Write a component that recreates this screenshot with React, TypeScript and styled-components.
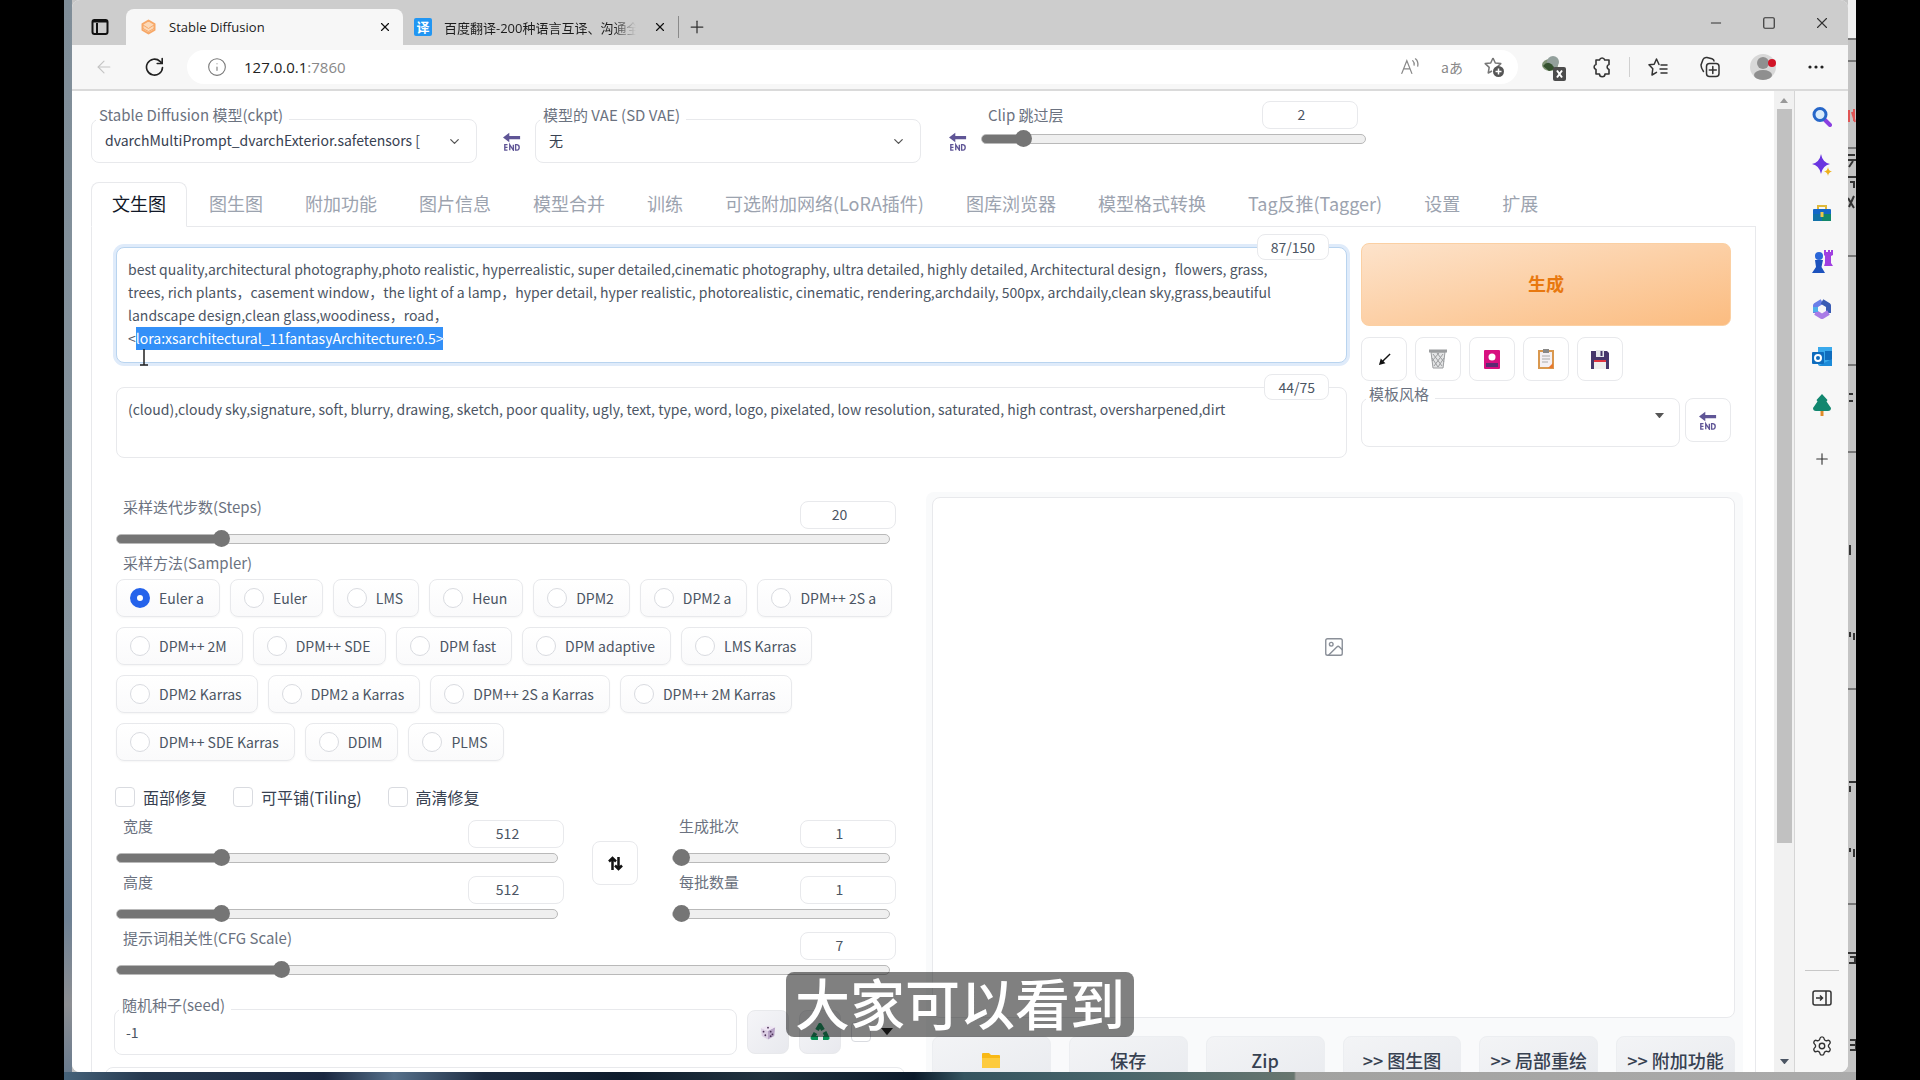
import React, { useEffect, useId, useRef, useState } from 'react';
import styled, { createGlobalStyle, css } from 'styled-components';
import { ArrowLeft, ChevronDown, Image as ImageIcon, Info, Minus, Plus, Settings, Square, X } from 'lucide-react';

const uiFont = '"Noto Sans CJK SC", "Noto Sans", sans-serif';
const chromeFont = '"Open Sans", "Noto Sans CJK SC", sans-serif';
const line = '#e8e9ec';

const GlobalStyle = createGlobalStyle`
  * { box-sizing: border-box; }
  html, body, #root { height: 100%; }
  body { margin: 0; background: #000; overflow: hidden; font-family: ${uiFont}; color: #4b5563; }
  button, input, select, textarea { font-family: inherit; color: inherit; margin: 0; }
  button { cursor: pointer; padding: 0; }
  svg { display: block; flex: none; }
`;

/* ---------- desktop and browser frame ---------- */

const Desktop = styled.div`
  position: relative;
  height: 100vh;
  margin: 0 64px;
  padding: 0 8px 8px;
  overflow: hidden;
  background:
    linear-gradient(90deg, #46637a 0, #26394f 80px, #1a2740 260px, #56708a 330px, #1c2b40 420px, #0d1b2b 560px, #22333f 700px, #0b1a2a 850px, #35545f 900px, #4a666b 1060px, #68766f 1230px, #a2a2a0 1232px, #ababab 100%) bottom / 100% 8px no-repeat,
    linear-gradient(180deg, #7f8d98 0, #87959f 60%, #6e8194 85%, #8d8f93 93%, #66798e 100%) left / 8px 100% no-repeat,
    #c4c4c4;
`;

const DocumentEdge = styled.svg`
  position: absolute;
  top: 0;
  right: 0;
  width: 8px;
  height: 1072px;
`;

const Window = styled.div`
  position: relative;
  display: flex;
  flex-direction: column;
  height: 100%;
  overflow: hidden;
  border-radius: 8px;
  background: #f7f7f7;
`;

const TitleBar = styled.header`
  display: flex;
  align-items: flex-end;
  height: 45px;
  flex: none;
  padding-left: 18px;
  background: #cdcdcd;
  font: 13px ${chromeFont};
  color: #1b1b1b;
`;

const ChromeButton = styled.button<{ $w?: number; $h?: number }>`
  display: flex;
  align-items: center;
  justify-content: center;
  width: ${(p) => p.$w ?? 24}px;
  height: ${(p) => p.$h ?? 36}px;
  flex: none;
  border: 0;
  background: none;
  color: #333;
`;

const TabStrip = styled.div`
  display: flex;
  margin-left: 16px;
`;

const BrowserTab = styled.div<{ $active?: boolean }>`
  display: flex;
  align-items: center;
  gap: 12px;
  width: ${(p) => (p.$active ? 277 : 275)}px;
  height: 36px;
  padding: 0 6px 0 ${(p) => (p.$active ? 14 : 11)}px;
  border-radius: 8px 8px 0 0;
  background: ${(p) => (p.$active ? '#f7f7f7' : 'transparent')};
`;

const TabTitle = styled.span<{ $fade?: boolean }>`
  flex: 1;
  min-width: 0;
  overflow: hidden;
  white-space: nowrap;
  ${(p) => p.$fade && css`mask-image: linear-gradient(90deg, #000 88%, transparent);`}
`;

const TranslateBadge = styled.span`
  width: 18px;
  height: 18px;
  border-radius: 2px;
  background: #2196f3;
  color: #fff;
  font: bold 13px/18px ${uiFont};
  text-align: center;
`;

const Divider = styled.span<{ $h: number; $c?: string }>`
  width: 1px;
  height: ${(p) => p.$h}px;
  background: ${(p) => p.$c ?? '#8a8a8a'};
`;

const NewTab = styled.div`
  display: flex;
  align-items: center;
  gap: 6px;
  height: 36px;
`;

const WindowButtons = styled.div`
  display: flex;
  align-self: stretch;
  align-items: center;
  margin-left: auto;
`;

const Toolbar = styled.div`
  display: flex;
  align-items: center;
  height: 46px;
  flex: none;
  padding: 0 8px 0 16px;
  border-bottom: 2px solid #dadada;
`;

const AddressBar = styled.div`
  display: flex;
  align-items: center;
  flex: 1;
  height: 34px;
  margin-left: -3px;
  margin-right: 15px;
  padding: 0 3px 0 20px;
  border-radius: 17px;
  background: #fff;
  color: #777;
`;

const Address = styled.div`
  flex: 1;
  margin-left: 17px;
  font: 15px ${chromeFont};
  color: #888;
  b { font-weight: 400; color: #222; }
`;

const ToolIcon = styled(ChromeButton)`
  width: 42px;
  height: 34px;
`;

const Language = styled.span`
  font-size: 14px;
  line-height: 20px;
  color: #888;
`;

const Body = styled.div`
  display: flex;
  flex: 1;
  min-height: 0;
`;

const Page = styled.main`
  flex: 1;
  min-width: 0;
  overflow: hidden;
  padding: 10px 18px 0 19px;
  background: #fff;
`;

const ScrollBar = styled.div`
  display: flex;
  flex-direction: column;
  align-items: center;
  justify-content: space-between;
  width: 21px;
  padding: 7px 0 8px;
  border-right: 1px solid #d6d6d6;
  background: #f1f1f1;
`;

const ScrollThumb = styled.div`
  width: 15px;
  height: 76%;
  margin-bottom: auto;
  margin-top: 6px;
  background: #c1c1c1;
`;

const SideBar = styled.aside`
  display: flex;
  flex-direction: column;
  align-items: center;
  width: 53px;
  padding: 2px 0;
  background: #f7f7f7;
`;

const SideButton = styled(ChromeButton)`
  width: 48px;
  height: 48px;
`;

const AddButton = styled(SideButton)`
  margin-top: 6px;
`;

const SideRule = styled.span`
  width: 34px;
  height: 1px;
  margin-top: auto;
  margin-bottom: 3px;
  background: #c8c8c8;
`;

/* ---------- form parts ---------- */

const QuickSettings = styled.div`
  display: grid;
  grid-template-columns: minmax(0, 386px) 58px minmax(0, 386px) 60px minmax(0, 385px);
  align-items: start;
`;

const FieldBox = styled.div<{ $h: number; $top?: number }>`
  position: relative;
  flex: 1;
  height: ${(p) => p.$h}px;
  margin-top: ${(p) => p.$top ?? 0}px;
  border: 1px solid ${line};
  border-radius: 8px;
  background: #fff;
`;

const FieldLabel = styled.label`
  position: absolute;
  top: -15px;
  left: 4px;
  padding: 0 6px 0 3px;
  border-radius: 4px;
  background: #fff;
  font-size: 15px;
  line-height: 20px;
  white-space: nowrap;
  color: #6b7280;
`;

const Select = styled.select`
  width: 100%;
  height: 100%;
  padding: 0 44px 2px 13px;
  border: 0;
  border-radius: 8px;
  appearance: none;
  background: transparent;
  font-size: 14px;
  color: #374151;
`;

const SelectArrow = styled.span<{ $right: number; $top: number }>`
  position: absolute;
  right: ${(p) => p.$right}px;
  top: ${(p) => p.$top}px;
  pointer-events: none;
  color: #555;
`;

const PlainInput = styled.input`
  width: 100%;
  height: 100%;
  padding: 0 11px;
  border: 0;
  border-radius: 8px;
  background: transparent;
  font-size: 14px;
`;

const IconButton = styled.button<{ $filled?: boolean; $w?: number; $top?: number }>`
  display: flex;
  align-items: center;
  justify-content: center;
  width: ${(p) => p.$w ?? 46}px;
  height: 44px;
  flex: none;
  margin-top: ${(p) => p.$top ?? 0}px;
  border: 1px solid ${line};
  border-radius: 8px;
  background: ${(p) => (p.$filled ? 'linear-gradient(135deg, #f5f5f8, #e8e9ee)' : '#fff')};
  color: #111;
`;

const RefreshButton = styled(IconButton)`
  justify-self: end;
  border-color: transparent;
`;

const SliderBlock = styled.div`
  display: grid;
  grid-template-columns: 1fr auto;
  grid-template-rows: 28px 20px;
`;

const SliderLabel = styled.label<{ $low?: boolean }>`
  padding-left: 7px;
  font-size: 15px;
  line-height: ${(p) => (p.$low ? 28 : 12)}px;
  color: #6b7280;
`;

const NumberBox = styled.input<{ $inset?: number }>`
  width: 96px;
  height: 28px;
  margin-right: ${(p) => p.$inset ?? 0}px;
  padding: 0 17px 2px 0;
  border: 1px solid ${line};
  border-radius: 8px;
  background: #fff;
  font-size: 14px;
  text-align: center;
  appearance: textfield;
  &::-webkit-inner-spin-button { appearance: none; }
`;

const Range = styled.input<{ $full?: boolean }>`
  grid-column: 1 / -1;
  width: ${(p) => (p.$full ? '100%' : 'calc(100% - 6px)')};
  height: 20px;
  margin: 0;
  appearance: none;
  background: none;
  &::-webkit-slider-runnable-track {
    height: 10px;
    border: 1px solid #b9b9b9;
    border-radius: 5px;
    background: linear-gradient(#757575, #757575) left / var(--fill) 100% no-repeat border-box, #efefef;
  }
  &::-webkit-slider-thumb {
    appearance: none;
    width: 17px;
    height: 17px;
    margin-top: -5px;
    border-radius: 50%;
    background: #757575;
  }
`;

/* ---------- tabs and panel ---------- */

const Tabs = styled.nav`
  display: flex;
  gap: 2px;
  margin-top: 19px;
  margin-bottom: -1px;
`;

const TabButton = styled.button<{ $active?: boolean }>`
  height: 45px;
  padding: 0 20px 3px;
  border: 1px solid ${(p) => (p.$active ? line : 'transparent')};
  border-bottom-color: ${(p) => (p.$active ? '#fff' : 'transparent')};
  border-radius: 8px 8px 0 0;
  background: ${(p) => (p.$active ? '#fff' : 'transparent')};
  font-size: 18px;
  white-space: nowrap;
  color: ${(p) => (p.$active ? '#111827' : '#9ca3af')};
  & + & { border-width: 1px 0; }
`;

const Panel = styled.section`
  padding: 16px 24px 0;
  border: 1px solid ${line};
`;

const PromptRow = styled.div`
  display: grid;
  grid-template-columns: 1231fr 370fr;
  gap: 14px;
`;

const PromptColumn = styled.div`
  display: flex;
  flex-direction: column;
  gap: 24px;
  padding-top: 4px;
`;

const PromptBox = styled.div`
  position: relative;
  display: flex;
`;

const Prompt = styled.textarea<{ $h: number; $lit?: boolean }>`
  width: 100%;
  height: ${(p) => p.$h}px;
  padding: 10px 11px 0;
  border: 1px solid ${(p) => (p.$lit ? '#b9d4ef' : line)};
  border-radius: 8px;
  box-shadow: ${(p) => (p.$lit ? '0 0 0 3px #dfebfa' : 'none')};
  background: #fff;
  outline: 0;
  resize: none;
  overflow: hidden;
  font-size: 14px;
  line-height: 23px;
  &::selection { background: #3390f8; color: #fff; }
`;

const TokenCount = styled.output`
  position: absolute;
  top: -13px;
  right: 18px;
  padding: 0 13px;
  border: 1px solid ${line};
  border-radius: 8px;
  background: #fff;
  font-size: 14px;
  line-height: 24px;
`;

const MousePointer = styled.svg`
  position: absolute;
  left: 23px;
  top: 101px;
`;

const ActionColumn = styled.div`
  display: flex;
  flex-direction: column;
`;

const GenerateButton = styled.button`
  height: 83px;
  padding-bottom: 3px;
  border: 1px solid #fbd0a3;
  border-radius: 8px;
  background: linear-gradient(to bottom right, #fde3cb, #fbbc80);
  font-size: 18px;
  font-weight: 700;
  color: #e8780f;
`;

const ToolRow = styled.div<{ $top: number; $gap: number }>`
  display: flex;
  gap: ${(p) => p.$gap}px;
  margin-top: ${(p) => p.$top}px;
`;

const Workspace = styled.div`
  display: grid;
  grid-template-columns: 780fr 817fr;
  gap: 30px;
  margin: 34px -12px 0 0;
`;

const Parameters = styled.div`
  padding-top: 9px;
`;

const Sampler = styled.fieldset`
  margin: 6px 0 0;
  padding: 0;
  border: 0;
  legend {
    padding: 0 0 0 7px;
    font-size: 15px;
    line-height: 16px;
    color: #6b7280;
  }
`;

const Options = styled.div`
  display: flex;
  flex-wrap: wrap;
  gap: 10px;
  padding-top: 8px;
`;

const Option = styled.label`
  display: flex;
  align-items: center;
  gap: 9px;
  height: 38px;
  padding: 0 15px 0 13px;
  border: 1px solid ${line};
  border-radius: 8px;
  background: linear-gradient(#fff, #fafafb);
  box-shadow: 0 1px 2px rgba(0, 0, 0, 0.04);
  font-size: 14px;
  white-space: nowrap;
`;

const Tick = styled.input<{ $round?: boolean }>`
  width: 20px;
  height: 20px;
  flex: none;
  border: 1px solid #d9dbe0;
  border-radius: ${(p) => (p.$round ? '50%' : '4px')};
  appearance: none;
  background: #fff;
  &:checked { border: 7px solid #2563eb; }
`;

const CheckRow = styled.div`
  display: flex;
  gap: 26px;
  margin: 26px 0 13px -1px;
`;

const CheckLabel = styled.label`
  display: flex;
  align-items: center;
  gap: 8px;
  height: 20px;
  font-size: 16px;
  color: #374151;
`;

const SizeGrid = styled.div`
  display: grid;
  grid-template-columns: 448fr 52px 224fr;
  column-gap: 28px;
  align-items: start;
  margin-bottom: 8px;
`;

const Stack = styled.div`
  display: grid;
  gap: 8px;
`;

const SeedRow = styled.div`
  display: flex;
  align-items: center;
  gap: 10px;
  margin: 29px 0 12px -2px;
`;

const ExtraCheck = styled.label`
  display: flex;
  align-items: center;
  gap: 10px;
  width: 45px;
  color: #111;
`;

const Accordion = styled.div`
  height: 40px;
  margin: 0 -9px 0 -11px;
  border: 1px solid ${line};
  border-radius: 8px;
`;

const Gallery = styled.div`
  padding: 5px 8px 0 6px;
  border-radius: 8px;
  background: #f9fafb;
`;

const Preview = styled.div`
  display: flex;
  justify-content: center;
  height: 521px;
  padding-top: 138px;
  border: 1px solid ${line};
  border-radius: 8px;
  background: #fff;
  color: #8a8f98;
`;

const GalleryActions = styled.div`
  display: grid;
  grid-template-columns: repeat(6, 1fr);
  gap: 18px;
  margin-top: 18px;
`;

const GalleryButton = styled.button`
  display: flex;
  align-items: center;
  justify-content: center;
  height: 48px;
  border: 1px solid #eceef1;
  border-radius: 8px;
  background: linear-gradient(to bottom right, #f3f4f6, #e9ebef);
  font-size: 18px;
  font-weight: 500;
  white-space: nowrap;
  color: #374151;
`;

const Caption = styled.div`
  position: fixed;
  bottom: 43px;
  left: 50%;
  transform: translateX(-50%);
  padding: 0 9px 6px;
  border-radius: 8px;
  background: rgba(20, 20, 20, 0.54);
  font-size: 55px;
  font-weight: 500;
  line-height: 59px;
  white-space: nowrap;
  color: #fff;
`;

/* ---------- drawings ---------- */

const EndIcon = () => (
  <svg width="18" height="19" viewBox="0 0 20 24" preserveAspectRatio="none">
    <path d="M0 7 7 1v4h12v4H7v4z" fill="#5f5596" />
    <path d="M5 16H2v7h3M2 19.500h3M7.500 23v-7l4 7v-7M14 16v7h1.500q2.500-.5 2.500-3.500t-2.500-3.500z" fill="none" stroke="#5f5596" strokeWidth="1.500" />
  </svg>
);

const TriangleDown = ({ size = 9 }: { size?: number }) => (
  <svg width={size} height={size * 0.6} viewBox="0 0 10 6"><path d="M0 0h10L5 6z" fill="currentColor" /></svg>
);

const TriangleUp = () => (
  <svg width="8" height="5" viewBox="0 0 8 5"><path d="M0 5h8L4 0z" fill="#999" /></svg>
);

const TabActions = () => (
  <svg width="18" height="18" viewBox="0 0 18 18" fill="none" stroke="#111" strokeWidth="2">
    <rect x="1.500" y="2" width="15" height="14" rx="2" />
    <path d="M2 3.500h14M6 5v11" />
  </svg>
);

const GradioLogo = () => (
  <svg width="17" height="16" viewBox="0 0 17 16" fill="none" stroke="#f7a868" strokeWidth="2" strokeLinejoin="round">
    <path d="M8.500 1.500 14.500 5v6l-6 3.500-6-3.500V5z" fill="#fcd9b8" />
    <path d="m3 6 5.500 3.500L14 6M3 9.500l5.500 3 5.500-3" strokeWidth="1" />
  </svg>
);

const Reload = () => (
  <svg width="20" height="20" viewBox="0 0 20 20" fill="none" stroke="#222" strokeWidth="1.600" strokeLinecap="round">
    <path d="M17.500 10.500A8 8 0 1 1 15 4.300L17 6.500M17.200 1.500v5h-5" />
  </svg>
);

const ReadAloud = () => (
  <svg width="20" height="20" viewBox="0 0 22 22" fill="none" stroke="#888" strokeWidth="1.400" strokeLinecap="round">
    <path d="M2 18 7.500 4 13 18M4 13h7M14 4q2 2 1.500 5M17 2q3.500 3 2.500 8" />
  </svg>
);

const AddFavorite = () => (
  <svg width="22" height="22" viewBox="0 0 22 22" fill="none" stroke="#777" strokeWidth="1.500" strokeLinejoin="round">
    <path d="M10 2l2.300 5 5.500.6-4 3.800" />
    <path d="M10 2 7.700 7l-5.500.6 4 3.800-1 5.600L9 15" />
    <circle cx="15.500" cy="15.500" r="5.500" fill="#555" stroke="none" />
    <path d="M15.500 12.500v6M12.500 15.500h6" stroke="#fff" />
  </svg>
);

const Extension = () => (
  <svg width="26" height="28" viewBox="0 0 26 28">
    <ellipse cx="9" cy="12" rx="8" ry="6" fill="#7f9375" />
    <circle cx="12" cy="9" r="6" fill="#93a09c" />
    <path d="M2 13q6-8 12 3l-6 2z" fill="#35522f" />
    <rect x="12" y="14" width="13" height="14" rx="2" fill="#4c4c4c" />
    <path d="M16 17.500l5 7M21 17.500l-5 7" stroke="#fff" strokeWidth="2" />
  </svg>
);

const Puzzle = () => (
  <svg width="20" height="22" viewBox="0 0 20 22" fill="none" stroke="#333" strokeWidth="1.600" strokeLinejoin="round">
    <path d="M4 4h3.500a2.700 2.700 0 0 1 5.200 0H17v4.500a2.600 2.600 0 0 0 0 5V18h-4a2.700 2.700 0 0 1-5.500 0H4v-4.500a2.600 2.600 0 0 1 0-5z" />
  </svg>
);

const Favorites = () => (
  <svg width="20" height="20" viewBox="0 0 20 20" fill="none" stroke="#333" strokeWidth="1.500" strokeLinejoin="round" strokeLinecap="round">
    <path d="M11 7.500 8.500 2 6.200 7.200 1 7.800l3.800 3.900L4 18l4.500-2.700M13 8h6M12 12h7M13 16h6" />
  </svg>
);

const Collections = () => (
  <svg width="20" height="22" viewBox="0 0 20 22" fill="none" stroke="#333" strokeWidth="1.500" strokeLinecap="round">
    <rect x="6.500" y="7.500" width="12.500" height="13" rx="3" />
    <path d="M12.800 10.500v7M9.300 14h7M3.500 15.500Q1 12 1 9L3 3.500Q4 1 7 1.500l5 1.300q2 .7 2 2.200" />
  </svg>
);

const Profile = () => (
  <svg width="26" height="28" viewBox="0 0 26 28">
    <circle cx="13" cy="14" r="13" fill="#d8d8d8" />
    <circle cx="13" cy="10" r="6" fill="#8f8f8f" />
    <ellipse cx="13" cy="22" rx="9" ry="5" fill="#8f8f8f" />
    <circle cx="22" cy="10" r="4" fill="#d11427" />
  </svg>
);

const Dots = () => (
  <svg width="18" height="6" viewBox="0 0 18 6" fill="#222">
    <circle cx="3" cy="3" r="1.600" /><circle cx="9" cy="3" r="1.600" /><circle cx="15" cy="3" r="1.600" />
  </svg>
);

const SearchGlyph = () => (
  <svg width="20" height="20" viewBox="0 0 20 20" fill="none">
    <path d="m12 12 6 6" stroke="#8a3fe0" strokeWidth="4" strokeLinecap="round" />
    <circle cx="8" cy="7.500" r="6" stroke="#2767c9" strokeWidth="3" fill="#d9ecfb" />
  </svg>
);

const Sparkle = () => (
  <svg width="20" height="22" viewBox="0 0 20 22">
    <path d="M9 0q1.500 8.500 9 10-7.500 1.500-9 10-1.500-8.500-9-10 7.500-1.500 9-10z" fill="#6a35e0" />
    <path d="M16 13q.5 4 4 4.500-3.500.5-4 4.500-.5-4-4-4.500 3.500-.5 4-4.500z" fill="#eeb11c" />
  </svg>
);

const Briefcase = () => (
  <svg width="20" height="20" viewBox="0 0 20 20">
    <path d="M6 6V3h8v3" fill="none" stroke="#e0b93a" strokeWidth="2" />
    <rect x="1" y="6" width="18" height="6" rx="1" fill="#1467c7" />
    <path d="M1 11h18v7H1z" fill="#12876a" />
    <path d="M1 11h9v7H1z" fill="#1272a8" />
    <rect x="8.500" y="9" width="3" height="5" fill="#ecc94a" />
  </svg>
);

const Chess = () => (
  <svg width="22" height="24" viewBox="0 0 22 24">
    <path d="M13 1h2v2h2V1h2v2h1V1h2v5l-2 1v7l2 3h-9l1-3V7l-1-1z" fill="#a03fe0" />
    <circle cx="8" cy="7" r="4" fill="#2a66d8" />
    <path d="M4 11h8l-1.500 7 3.500 6H1l4-6z" fill="#1d52bd" />
  </svg>
);

const Office = () => (
  <svg width="20" height="22" viewBox="0 0 20 22" fill="none" strokeWidth="5" strokeLinejoin="round">
    <path d="M10 3.500 3.500 7.500V15" stroke="#6a7fe8" />
    <path d="m10 3.500 6.500 4V15" stroke="#3a5cb4" />
    <path d="m3.500 14.500 6.500 4 6.500-4" stroke="#a97be6" />
    <path d="M3.500 9v5" stroke="#4fb0ea" />
  </svg>
);

const Outlook = () => (
  <svg width="20" height="22" viewBox="0 0 20 22">
    <path d="M6 1h14v18H6z" fill="#39a9ec" />
    <path d="M13 5h7v9h-7z" fill="#0f6cbd" />
    <path d="M6 20h14V13z" fill="#1b8ad8" />
    <rect x="0" y="6" width="12" height="12" rx="1" fill="#0f6cbd" />
    <circle cx="6" cy="12" r="3" fill="none" stroke="#fff" strokeWidth="2" />
  </svg>
);

const Tree = () => (
  <svg width="20" height="22" viewBox="0 0 20 22">
    <path d="M8.500 15h3v7h-3z" fill="#e08b2a" />
    <path d="M10 0 15.500 6l-1 1.500L19 14q0 3-3 3H4q-3 0-3-3l4.500-6.500-1-1.500z" fill="#12876f" />
  </svg>
);

const HideSidebar = () => (
  <svg width="20" height="16" viewBox="0 0 20 16" fill="none" stroke="#333" strokeWidth="1.500">
    <rect x="1" y="1" width="18" height="14" rx="2" />
    <path d="M14 1v14M4 8h6M8 5.500 10.500 8 8 10.500" />
  </svg>
);

const ArrowDownLeft = () => (
  <svg width="13" height="13" viewBox="0 0 14 14"><path d="M13 1 5 9" stroke="#111" strokeWidth="1.500" /><path d="M1 13 3 6l5 5z" fill="#111" /></svg>
);

const TrashBin = () => (
  <svg width="18" height="20" viewBox="0 0 18 20" fill="none" stroke="#9b9d9f">
    <path d="M2 3l2 16h10l2-16z" fill="#e3e4e5" />
    <path d="M0 2h18" strokeWidth="3" />
    <path d="m4 5 9 12M8 4l7 9M3 9l6 9M14 5 5 17M10 4l-7 8M15 9l-6 9" />
  </svg>
);

const CardBack = () => (
  <svg width="16" height="19" viewBox="0 0 16 19"><rect width="16" height="19" rx="1" fill="#d81080" /><path d="M2 13h12v4H2z" fill="#5c2a72" /><circle cx="8" cy="7" r="3.500" fill="#fff" /></svg>
);

const ClipboardGlyph = () => (
  <svg width="16" height="20" viewBox="0 0 16 20"><path d="M1 2h14v17H1z" fill="#f4f0f4" stroke="#d9984f" strokeWidth="2" /><path d="M5 0h6v4H5z" fill="#888" /><path d="M4 7h8M4 10h8M4 13h6" stroke="#aaa" /><path d="M15 14v5h-5z" fill="#e8792e" /></svg>
);

const Floppy = () => (
  <svg width="18" height="19" viewBox="0 0 18 19"><path d="M0 1h16l2 2v16H0z" fill="#45366a" /><path d="M5 0h8v7H5z" fill="#e5e7ea" /><path d="M9.500 1h2v5h-2z" fill="#45366a" /><path d="M3 10h12v9H3z" fill="#eee" /><path d="M3 10h12v2H3z" fill="#df3440" /></svg>
);

const Dice = () => (
  <svg width="16" height="17" viewBox="0 0 18 18">
    <path d="M1 4 9 7v10l-7-4z" fill="#dccfe4" /><path d="m9 7 8-4-1 10-7 4z" fill="#b7a3c6" /><path d="m1 4 8-3 8 2-8 4z" fill="#eee5f3" />
    <path d="M4 8v.1M6 12v.1M12 8v.1M14 11v.1M12 13v.1M9 3.500v.1" stroke="#4c3358" strokeWidth="2" strokeLinecap="round" />
  </svg>
);

const Recycle = () => (
  <svg width="20" height="18" viewBox="0 0 20 18" fill="none" stroke="#0b9157" strokeWidth="4" strokeLinejoin="round">
    <path d="m7 7 3-5 3 5M14.500 9l3 6H13M8 15H2.500l3-5" />
  </svg>
);

const FolderGlyph = () => (
  <svg width="18" height="15" viewBox="0 0 18 15"><path d="M0 1q0-1 1-1h6l2 2h8q1 0 1 1v11q0 1-1 1H1q-1 0-1-1z" fill="#f9b916" /><path d="M0 5h18v9q0 1-1 1H1q-1 0-1-1z" fill="#fdcb3e" /></svg>
);

const SwapArrows = () => (
  <svg width="15" height="15" viewBox="0 0 15 15" fill="none" stroke="#111" strokeWidth="2.500"><path d="M4.500 14V2M1 5.500 4.500 2 8 5.500M10.500 1v12M7 9.500l3.500 3.500L14 9.500" /></svg>
);

/* ---------- composed controls ---------- */

type SliderProps = { label: string; value: number; min: number; max: number; top?: boolean };

const Slider = ({ label, value, min, max, top }: SliderProps) => {
  const id = useId();
  const [v, setV] = useState(value);
  const share = (v - min) / (max - min);
  const change = (e: React.ChangeEvent<HTMLInputElement>) => setV(Number(e.target.value));
  return (
    <SliderBlock>
      <SliderLabel htmlFor={id} $low={top}>{label}</SliderLabel>
      <NumberBox type="number" aria-label={label} value={v} onChange={change} $inset={top ? 8 : 0} />
      <Range
        id={id} type="range" min={min} max={max} value={v} onChange={change} $full={top}
        style={{ '--fill': `calc(8px + (100% - 17px) * ${share})` } as React.CSSProperties}
      />
    </SliderBlock>
  );
};

const tabs = ['文生图', '图生图', '附加功能', '图片信息', '模型合并', '训练', '可选附加网络(LoRA插件)', '图库浏览器', '模型格式转换', 'Tag反推(Tagger)', '设置', '扩展'];

const samplers = ['Euler a', 'Euler', 'LMS', 'Heun', 'DPM2', 'DPM2 a', 'DPM++ 2S a', 'DPM++ 2M', 'DPM++ SDE', 'DPM fast', 'DPM adaptive', 'LMS Karras', 'DPM2 Karras', 'DPM2 a Karras', 'DPM++ 2S a Karras', 'DPM++ 2M Karras', 'DPM++ SDE Karras', 'DDIM', 'PLMS'];

const prompt = `best quality,architectural photography,photo realistic, hyperrealistic, super detailed,cinematic photography, ultra detailed, highly detailed, Architectural design，flowers, grass,
trees, rich plants，casement window，the light of a lamp，hyper detail, hyper realistic, photorealistic, cinematic, rendering,archdaily, 500px, archdaily,clean sky,grass,beautiful
landscape design,clean glass,woodiness，road，
<lora:xsarchitectural_11fantasyArchitecture:0.5>`;

const negative = '(cloud),cloudy sky,signature, soft, blurry, drawing, sketch, poor quality, ugly, text, type, word, logo, pixelated, low resolution, saturated, high contrast, oversharpened,dirt';

const sideIcons: [string, React.FC][] = [['搜索', SearchGlyph], ['发现', Sparkle], ['工具', Briefcase], ['游戏', Chess], ['Office', Office], ['Outlook', Outlook], ['树', Tree]];

const actions = ['保存', 'Zip', '>> 图生图', '>> 局部重绘', '>> 附加功能'];

const PromptEditor = () => {
  const ref = useRef<HTMLTextAreaElement>(null);
  useEffect(() => {
    ref.current?.focus();
    ref.current?.setSelectionRange(prompt.indexOf('<lora') + 1, prompt.length);
  }, []);
  return <Prompt ref={ref} aria-label="提示词" defaultValue={prompt} spellCheck={false} $h={116} $lit />;
};

export default function App() {
  return (
    <>
      <GlobalStyle />
      <Desktop>
        <DocumentEdge viewBox="0 0 8 1072">
          <path d="M0 0h8v38H0z" fill="#efefef" />
          <path d="M0 39h8M0 61h8M0 148h8M0 256h8M0 365h8M0 452h8M0 689h8M0 904h8" stroke="#777" strokeWidth="2" />
          <path d="M1 110v12M4 112l3 10M6 109v12" stroke="#e05555" strokeWidth="2" />
          <path d="M0 155h7M0 160h8M5 161l-4 6M0 177h8M2 182h4v6M0 198l6 10M6 196l-5 11M1 394h4M1 401h4M2 545v10M2 632v5M6 633v7M1 782h7M2 786v6M2 848v4M6 849v8M0 953h8M2 957h5v6h-6M2 1040h6v10h-6M2 1045h5" fill="none" stroke="#333" strokeWidth="2" />
        </DocumentEdge>
        <Window>
          <TitleBar>
            <ChromeButton $w={20} aria-label="标签页操作"><TabActions /></ChromeButton>
            <TabStrip>
              <BrowserTab $active>
                <GradioLogo />
                <TabTitle>Stable Diffusion</TabTitle>
                <ChromeButton aria-label="关闭标签页"><X size={14} color="#111" /></ChromeButton>
              </BrowserTab>
              <BrowserTab>
                <TranslateBadge>译</TranslateBadge>
                <TabTitle $fade>百度翻译-200种语言互译、沟通全</TabTitle>
                <ChromeButton aria-label="关闭标签页"><X size={14} color="#111" /></ChromeButton>
              </BrowserTab>
            </TabStrip>
            <NewTab>
              <Divider $h={22} />
              <ChromeButton aria-label="新建标签页"><Plus size={20} strokeWidth={1.5} /></ChromeButton>
            </NewTab>
            <WindowButtons>
              <ChromeButton $w={53} aria-label="最小化"><Minus size={16} strokeWidth={1.5} /></ChromeButton>
              <ChromeButton $w={53} aria-label="最大化"><Square size={14} strokeWidth={2} /></ChromeButton>
              <ChromeButton $w={53} aria-label="关闭"><X size={18} strokeWidth={1.5} /></ChromeButton>
            </WindowButtons>
          </TitleBar>
          <Toolbar>
            <ChromeButton $w={32} aria-label="后退"><ArrowLeft size={20} strokeWidth={1.3} color="#c4c4c4" /></ChromeButton>
            <ChromeButton $w={70} aria-label="刷新"><Reload /></ChromeButton>
            <AddressBar>
              <Info size={20} strokeWidth={1.3} />
              <Address><b>127.0.0.1</b>:7860</Address>
              <ToolIcon aria-label="大声朗读"><ReadAloud /></ToolIcon>
              <ToolIcon aria-label="翻译"><Language>aあ</Language></ToolIcon>
              <ToolIcon aria-label="收藏"><AddFavorite /></ToolIcon>
            </AddressBar>
            <ToolIcon aria-label="扩展程序"><Extension /></ToolIcon>
            <ChromeButton $w={54} aria-label="扩展"><Puzzle /></ChromeButton>
            <Divider $h={20} $c="#d0d0d0" />
            <ChromeButton $w={56} aria-label="收藏夹"><Favorites /></ChromeButton>
            <ChromeButton $w={48} aria-label="集锦"><Collections /></ChromeButton>
            <ChromeButton $w={58} aria-label="个人资料"><Profile /></ChromeButton>
            <ChromeButton $w={48} aria-label="更多"><Dots /></ChromeButton>
          </Toolbar>
          <Body>
            <Page>
              <QuickSettings>
                <FieldBox $h={44} $top={18}>
                  <FieldLabel htmlFor="ckpt">Stable Diffusion 模型(ckpt)</FieldLabel>
                  <Select id="ckpt"><option>dvarchMultiPrompt_dvarchExterior.safetensors [</option></Select>
                  <SelectArrow $right={14} $top={14}><ChevronDown size={15} /></SelectArrow>
                </FieldBox>
                <RefreshButton $top={18} aria-label="刷新模型"><EndIcon /></RefreshButton>
                <FieldBox $h={44} $top={18}>
                  <FieldLabel htmlFor="vae">模型的 VAE (SD VAE)</FieldLabel>
                  <Select id="vae"><option>无</option></Select>
                  <SelectArrow $right={14} $top={14}><ChevronDown size={15} /></SelectArrow>
                </FieldBox>
                <RefreshButton $top={18} aria-label="刷新 VAE"><EndIcon /></RefreshButton>
                <Slider label="Clip 跳过层" value={2} min={1} max={12} top />
              </QuickSettings>
              <Tabs>
                {tabs.map((t, i) => <TabButton key={t} $active={i === 0}>{t}</TabButton>)}
              </Tabs>
              <Panel>
                <PromptRow>
                  <PromptColumn>
                    <PromptBox>
                      <PromptEditor />
                      <TokenCount>87/150</TokenCount>
                      <MousePointer width="10" height="18" viewBox="0 0 10 18" fill="none" stroke="#222" strokeWidth="1.500"><path d="M5 1v16M1 17h8" /></MousePointer>
                    </PromptBox>
                    <PromptBox>
                      <Prompt aria-label="反向提示词" defaultValue={negative} spellCheck={false} $h={71} />
                      <TokenCount>44/75</TokenCount>
                    </PromptBox>
                  </PromptColumn>
                  <ActionColumn>
                    <GenerateButton>生成</GenerateButton>
                    <ToolRow $top={11} $gap={8}>
                      <IconButton aria-label="读取参数"><ArrowDownLeft /></IconButton>
                      <IconButton aria-label="清空"><TrashBin /></IconButton>
                      <IconButton aria-label="附加网络"><CardBack /></IconButton>
                      <IconButton aria-label="应用模板"><ClipboardGlyph /></IconButton>
                      <IconButton aria-label="保存模板"><Floppy /></IconButton>
                    </ToolRow>
                    <ToolRow $top={17} $gap={5}>
                      <FieldBox $h={49}>
                        <FieldLabel htmlFor="style">模板风格</FieldLabel>
                        <Select id="style"><option /></Select>
                        <SelectArrow $right={15} $top={14}><TriangleDown /></SelectArrow>
                      </FieldBox>
                      <IconButton aria-label="刷新模板"><EndIcon /></IconButton>
                    </ToolRow>
                  </ActionColumn>
                </PromptRow>
                <Workspace>
                  <Parameters>
                    <Slider label="采样迭代步数(Steps)" value={20} min={1} max={150} />
                    <Sampler>
                      <legend>采样方法(Sampler)</legend>
                      <Options>
                        {samplers.map((s, i) => (
                          <Option key={s}><Tick type="radio" name="sampler" defaultChecked={i === 0} $round />{s}</Option>
                        ))}
                      </Options>
                    </Sampler>
                    <CheckRow>
                      {['面部修复', '可平铺(Tiling)', '高清修复'].map((c) => (
                        <CheckLabel key={c}><Tick type="checkbox" />{c}</CheckLabel>
                      ))}
                    </CheckRow>
                    <SizeGrid>
                      <Stack>
                        <Slider label="宽度" value={512} min={64} max={2048} />
                        <Slider label="高度" value={512} min={64} max={2048} />
                      </Stack>
                      <IconButton $top={21} aria-label="交换宽高"><SwapArrows /></IconButton>
                      <Stack>
                        <Slider label="生成批次" value={1} min={1} max={100} />
                        <Slider label="每批数量" value={1} min={1} max={8} />
                      </Stack>
                    </SizeGrid>
                    <Slider label="提示词相关性(CFG Scale)" value={7} min={1} max={30} />
                    <SeedRow>
                      <FieldBox $h={46}>
                        <FieldLabel htmlFor="seed">随机种子(seed)</FieldLabel>
                        <PlainInput id="seed" defaultValue="-1" />
                      </FieldBox>
                      <IconButton $filled $w={42} aria-label="随机"><Dice /></IconButton>
                      <IconButton $filled $w={42} aria-label="重用种子"><Recycle /></IconButton>
                      <ExtraCheck><Tick type="checkbox" aria-label="更多种子选项" /><TriangleDown size={12} /></ExtraCheck>
                    </SeedRow>
                    <Accordion />
                  </Parameters>
                  <Gallery>
                    <Preview><ImageIcon size={22} strokeWidth={1.5} /></Preview>
                    <GalleryActions>
                      <GalleryButton aria-label="打开文件夹"><FolderGlyph /></GalleryButton>
                      {actions.map((a) => <GalleryButton key={a}>{a}</GalleryButton>)}
                    </GalleryActions>
                  </Gallery>
                </Workspace>
              </Panel>
            </Page>
            <ScrollBar>
              <TriangleUp />
              <ScrollThumb />
              <TriangleDown />
            </ScrollBar>
            <SideBar>
              {sideIcons.map(([name, Glyph]) => <SideButton key={name} aria-label={name}><Glyph /></SideButton>)}
              <AddButton aria-label="添加"><Plus size={18} strokeWidth={1.5} /></AddButton>
              <SideRule />
              <SideButton aria-label="隐藏侧栏"><HideSidebar /></SideButton>
              <SideButton aria-label="设置"><Settings size={22} strokeWidth={1.5} /></SideButton>
            </SideBar>
          </Body>
        </Window>
      </Desktop>
      <Caption>大家可以看到</Caption>
    </>
  );
}
